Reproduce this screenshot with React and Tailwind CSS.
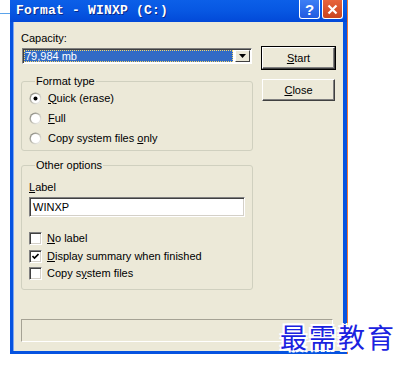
import React from 'react'

function Radio({ checked }) {
  return (
    <svg width="13" height="13" viewBox="0 0 13 13" className="shrink-0">
      <defs>
        <linearGradient id="rg" x1="0" y1="0" x2="1" y2="1">
          <stop offset="0" stopColor="#7a7a72" />
          <stop offset="0.55" stopColor="#c8c6bc" />
          <stop offset="1" stopColor="#ffffff" />
        </linearGradient>
      </defs>
      <circle cx="6.5" cy="6.5" r="6" fill="url(#rg)" />
      <circle cx="6.5" cy="6.5" r="4.6" fill="#fff" />
      {checked && <circle cx="6.5" cy="6.5" r="2" fill="#000" />}
    </svg>
  )
}

function Checkbox({ checked }) {
  return (
    <span className="flex h-[13px] w-[13px] shrink-0 items-center justify-center border border-t-[#808080] border-l-[#808080] border-r-white border-b-white bg-white shadow-[inset_1px_1px_0_#404040,inset_-1px_-1px_0_#d4d0c8]">
      {checked && (
        <svg width="7" height="7" viewBox="0 0 7 7">
          <path d="M0.5 3 L2.5 5 L6.5 1" fill="none" stroke="#000" strokeWidth="1.6" />
        </svg>
      )}
    </span>
  )
}

function Button({ children, primary }) {
  return (
    <div className={`h-[24px] w-[75px] ${primary ? 'border border-black' : 'p-px'}`}>
      <div className="flex h-full w-full items-center justify-center border border-t-white border-l-white border-r-[#404040] border-b-[#404040] bg-[#ece9d8] text-[11px] text-black shadow-[inset_-1px_-1px_0_#808080]">
        {children}
      </div>
    </div>
  )
}

export default function App() {
  return (
    <div className="relative h-[370px] w-[401px] overflow-hidden bg-white font-['Liberation_Sans',Arial,sans-serif] text-[11px] leading-[13px] text-black">
      {/* stray highlight left of the window */}
      <div className="absolute left-0 top-[13px] h-px w-[10px] bg-[#5ba3ea]" />

      <div className="ml-[10px] flex h-[354px] w-[337px] flex-col bg-[#0653e0] shadow-[1px_0_0_#ef7838]">
        {/* Title bar */}
        <div className="flex h-[22px] items-start bg-gradient-to-b from-[#0c5fe8] via-[#0757e2] to-[#0349d8] pl-[6px] pr-[4px]">
          <span className="mt-[3px] flex-1 font-['Liberation_Mono',monospace] text-[13px] font-bold leading-[15px] tracking-[0.2px] text-white [text-shadow:1px_1px_0_#0a2a8a]">
            Format - WINXP (C:)
          </span>
          <div className="flex gap-[2px]">
            <div className="flex h-[19px] w-[21px] items-center justify-center rounded-b-[3px] border border-t-0 border-white bg-gradient-to-b from-[#3d7ff5] to-[#2259e0] font-['Liberation_Sans',sans-serif] text-[15px] font-bold leading-none text-white">
              ?
            </div>
            <div className="flex h-[19px] w-[21px] items-center justify-center rounded-b-[3px] border border-t-0 border-white bg-gradient-to-b from-[#e7643c] to-[#c9441e]">
              <svg width="11" height="11" viewBox="0 0 11 11">
                <path d="M1.5 1.5 L9.5 9.5 M9.5 1.5 L1.5 9.5" stroke="#fff" strokeWidth="2.2" />
              </svg>
            </div>
          </div>
        </div>

        {/* Body */}
        <div className="flex flex-1 border-b-[3px] border-l-[3px] border-r-[4px] border-[#0653e0]">
          <div className="flex flex-1 flex-col bg-[#ece9d8] pl-[8px] pr-[6px] pt-[10px] shadow-[inset_1px_0_0_#7fa6f0]">
            <div className="flex gap-[8px]">
              {/* Left column */}
              <div className="flex w-[232px] flex-col">
                <span>Capacity:</span>
                <div className="ml-px mt-[3px] flex h-[16px] w-[230px] border border-t-[#808080] border-l-[#808080] border-r-white border-b-white bg-white p-px shadow-[inset_1px_1px_0_#404040]">
                  <div className="flex flex-1 items-center bg-[#316ac5] pl-[1px] text-white outline-1 outline-dotted outline-offset-[-1px] outline-[#f5d66a]">
                    79,984 mb
                  </div>
                  <div className="ml-[2px] flex w-[15px] items-center justify-center border border-t-white border-l-white border-r-[#404040] border-b-[#404040] bg-[#ece9d8]">
                    <svg width="7" height="4" viewBox="0 0 7 4">
                      <path d="M0 0 H7 L3.5 4 Z" fill="#000" />
                    </svg>
                  </div>
                </div>

                <fieldset className="mt-[11px] rounded-[3px] border border-[#d0d0bf] pb-[2px] pl-[7px]">
                  <legend className="ml-[6px] px-[1px] leading-[13px]">Format type</legend>
                  <div className="flex h-[20px] items-center gap-[6px]">
                    <Radio checked />
                    <span><u>Q</u>uick (erase)</span>
                  </div>
                  <div className="flex h-[20px] items-center gap-[6px]">
                    <Radio />
                    <span><u>F</u>ull</span>
                  </div>
                  <div className="flex h-[20px] items-center gap-[6px]">
                    <Radio />
                    <span>Copy system files <u>o</u>nly</span>
                  </div>
                </fieldset>

                <fieldset className="mt-[8px] rounded-[3px] border border-[#d0d0bf] pb-[7px] pl-[7px]">
                  <legend className="ml-[6px] px-[1px] leading-[13px]">Other options</legend>
                  <span className="mt-[9px] block"><u>L</u>abel</span>
                  <div className="mt-[3px] flex h-[20px] w-[216px] items-center border border-t-[#808080] border-l-[#808080] border-r-white border-b-white bg-white pl-[3px] shadow-[inset_1px_1px_0_#404040,inset_-1px_-1px_0_#d4d0c8]">
                    WINXP
                  </div>
                  <div className="mt-[13px] flex h-[17px] items-center gap-[5px]">
                    <Checkbox />
                    <span><u>N</u>o label</span>
                  </div>
                  <div className="flex h-[18px] items-center gap-[5px]">
                    <Checkbox checked />
                    <span><u>D</u>isplay summary when finished</span>
                  </div>
                  <div className="flex h-[17px] items-center gap-[5px]">
                    <Checkbox />
                    <span>Copy s<u>y</u>stem files</span>
                  </div>
                </fieldset>
              </div>

              {/* Right column */}
              <div className="mt-[14px] flex w-[75px] flex-col gap-[8px]">
                <Button primary><span><u>S</u>tart</span></Button>
                <Button><span><u>C</u>lose</span></Button>
              </div>
            </div>

            {/* Status panel */}
            <div className="mt-[29px] h-[23px] w-[312px] border border-t-[#a5a294] border-l-[#a5a294] border-r-white border-b-white" />
          </div>
        </div>
      </div>

      {/* Watermark */}
      <div className="absolute left-[280px] top-[321px] font-['Noto_Sans_CJK_SC',sans-serif] text-[27px] leading-[32px] tracking-[2px] text-[#1a22e0] [text-shadow:1px_0_0_#fff,-1px_0_0_#fff,0_1px_0_#fff,0_-1px_0_#fff,2px_2px_0_#fff,-2px_-2px_0_#fff,2px_-2px_0_#fff,-2px_2px_0_#fff]">
        最需教育
      </div>
    </div>
  )
}
